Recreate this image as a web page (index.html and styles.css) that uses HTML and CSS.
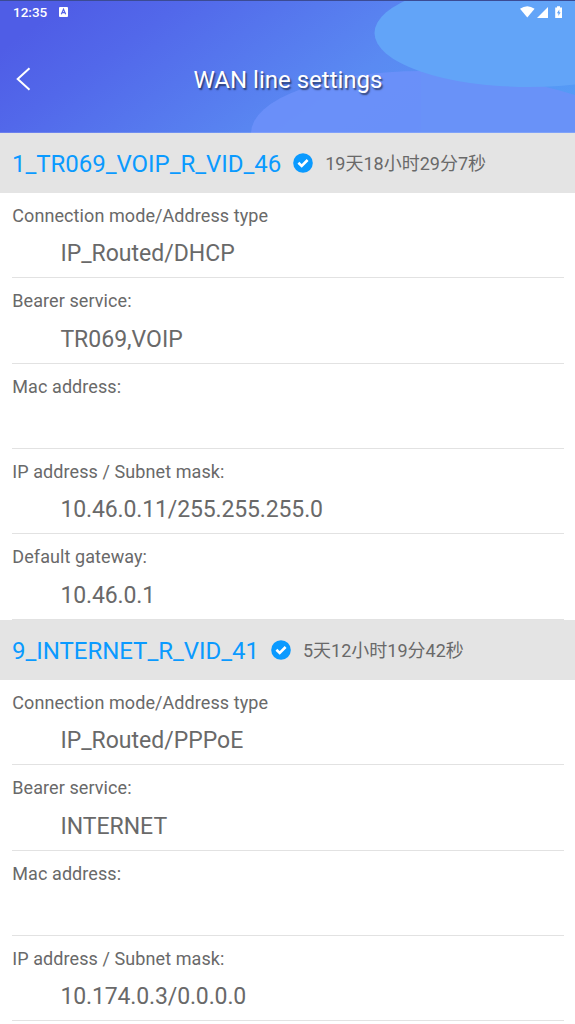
FILE: index.html
```html
<!DOCTYPE html>
<html lang="en">
<head>
<meta charset="utf-8">
<title>WAN line settings</title>
<link rel="stylesheet" href="styles.css">
</head>
<body>
<div class="screen">
  <header class="hero">
    <svg class="hero-art" viewBox="0 0 575 133" aria-hidden="true">
      <defs>
        <linearGradient id="sky" gradientUnits="userSpaceOnUse" x1="70" y1="0" x2="290" y2="310">
          <stop offset="0" stop-color="#4f5de6"/>
          <stop offset=".18" stop-color="#5268ea"/>
          <stop offset=".6" stop-color="#5a8af2"/>
          <stop offset="1" stop-color="#559cf6"/>
        </linearGradient>
      </defs>
      <rect width="575" height="133" fill="url(#sky)"/>
      <ellipse cx="421" cy="133" rx="170" ry="62" fill="#6b90fa" fill-opacity=".9"/>
      <path d="M421 71.500Q500 72 575 95V133H421Z" fill="#6992f8"/>
      <ellipse cx="529" cy="33" rx="154.500" ry="54" fill="#62a4f8"/>
      <path d="M0 .5H575" stroke="#3b4b94"/>
      <path d="M0 132.500H575" stroke="#fff" stroke-opacity=".15"/>
    </svg>
    <div class="status">
      <span class="clock">12:35</span>
      <svg class="notice" viewBox="0 0 9 10"><rect width="9" height="10" rx="1" fill="#fff"/><path d="M2.300 7.200 4.500 2.300 6.700 7.200M3.200 5.700H5.800" fill="none" stroke="#5262e7" stroke-width="1.200"/></svg>
      <svg class="signals" viewBox="0 0 44 14">
        <path d="M0 2.800Q7.300-2.300 14.600 2.800L7.300 11.500Z" fill="#fff"/>
        <path d="M28 1V12H17Z" fill="#fff"/>
        <path d="M37 .2h3v1.300h2V12h-6.800V1.500H37Z" fill="#fff"/>
        <path d="M39.300 3.500 36.900 7.200h1.500V10l2.200-3.800h-1.300Z" fill="#62a4f8"/>
      </svg>
    </div>
    <div class="titlebar">
      <svg class="back" viewBox="0 0 16 24"><path d="M13.500 1.300 1.700 12 13.500 22.700" fill="none" stroke="#fff" stroke-width="2"/></svg>
      <h1 class="title">WAN line settings</h1>
    </div>
  </header>
  <main>
    <section>
      <div class="line-head">
        <h2 class="line-name">1_TR069_VOIP_R_VID_46</h2>
        <svg class="check" viewBox="0 0 20 20"><circle cx="10" cy="10" r="9.800" fill="#0a9aff"/><path d="M5.400 9.700 8.700 12.900 14.600 7" fill="none" stroke="#fff" stroke-width="2.600"/></svg>
        <span class="uptime">19天18小时29分7秒</span>
      </div>
      <div class="row"><div class="label">Connection mode/Address type</div><div class="value">IP_Routed/DHCP</div></div>
      <div class="row"><div class="label">Bearer service:</div><div class="value">TR069,VOIP</div></div>
      <div class="row"><div class="label">Mac address:</div><div class="value"></div></div>
      <div class="row"><div class="label">IP address / Subnet mask:</div><div class="value numeric">10.46.0.11/255.255.255.0</div></div>
      <div class="row"><div class="label">Default gateway:</div><div class="value numeric">10.46.0.1</div></div>
    </section>
    <section>
      <div class="line-head">
        <h2 class="line-name">9_INTERNET_R_VID_41</h2>
        <svg class="check" viewBox="0 0 20 20"><circle cx="10" cy="10" r="9.800" fill="#0a9aff"/><path d="M5.400 9.700 8.700 12.900 14.600 7" fill="none" stroke="#fff" stroke-width="2.600"/></svg>
        <span class="uptime">5天12小时19分42秒</span>
      </div>
      <div class="row"><div class="label">Connection mode/Address type</div><div class="value">IP_Routed/PPPoE</div></div>
      <div class="row"><div class="label">Bearer service:</div><div class="value">INTERNET</div></div>
      <div class="row"><div class="label">Mac address:</div><div class="value"></div></div>
      <div class="row"><div class="label">IP address / Subnet mask:</div><div class="value numeric">10.174.0.3/0.0.0.0</div></div>
    </section>
  </main>
</div>
</body>
</html>
```
FILE: styles.css
```css
* { box-sizing: border-box; }
body { margin: 0; background: #fff; font-family: Roboto, "Noto Sans CJK SC", sans-serif; color: #696969; }
svg { display: block; flex: none; }
h1, h2 { margin: 0; font-weight: 400; }
.screen { width: 575px; height: 1024px; overflow: hidden; }
.hero { position: relative; height: 133px; color: #fff; }
.hero-art { position: absolute; top: 0; left: 0; width: 575px; height: 133px; }
.status { position: relative; display: flex; align-items: center; height: 25px; padding: 0 12px 0 13px; }
.clock { font-size: 13.5px; font-weight: 500; line-height: 24px; padding-bottom: 1px; }
.notice { width: 9px; height: 10px; margin-left: 12px; margin-bottom: 1px; }
.signals { width: 44px; height: 14px; margin-left: auto; margin-right: -1px; }
.titlebar { position: relative; display: flex; align-items: center; height: 108px; padding: 0 16px; }
.back { width: 16px; height: 24px; }
.title { flex: 1; margin-right: 15px; padding-top: 2px; text-align: center; font-size: 24px; line-height: 32px; text-shadow: 1.5px 1.5px 1.5px rgba(0, 0, 0, .5); }
.line-head { display: flex; align-items: center; height: 60.33px; padding: 0 12px; background: #e4e4e4; }
.line-name { padding-top: 2px; font-size: 24px; letter-spacing: -0.03px; line-height: 32px; color: #0a9aff; }
.check { width: 20px; height: 20px; margin: 0 12px; }
.uptime { padding-top: 2px; font-size: 18px; line-height: 26px; }
main { margin-top: -0.33px; }
.row { height: 85.333px; margin: 0 11px 0 12px; padding-top: 10.9px; border-bottom: 1px solid #e2e2e2; }
.label { padding-left: 0.3px; font-size: 18px; letter-spacing: 0.08px; line-height: 24px; }
.value { padding-left: 48.4px; margin-top: 10.4px; font-size: 23px; line-height: 32px; }
.numeric { letter-spacing: -0.13px; }
```
